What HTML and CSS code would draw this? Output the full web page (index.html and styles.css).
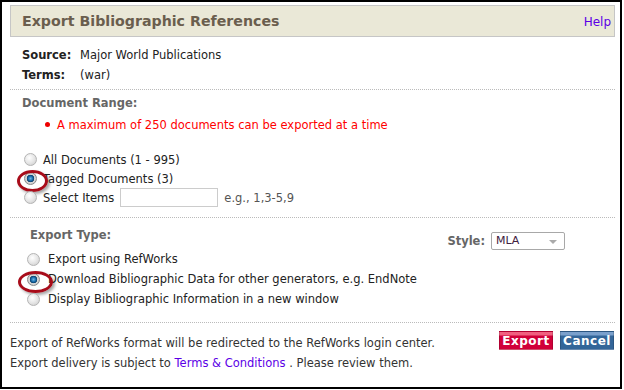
FILE: index.html
```html
<!DOCTYPE html>
<html lang="en">

<head>
	<meta charset="utf-8">
	<title>Export Bibliographic References</title>
	<link rel="stylesheet" href="styles.css">
</head>

<body>
	<div class="frame">
		<div class="header">
			<h1 class="title">Export Bibliographic References</h1>
			<a class="help" href="#">Help</a>
		</div>

		<div class="meta">
			<div class="metaRow"><b>Source:</b><span>Major World Publications</span></div>
			<div class="metaRow"><b>Terms:</b><span>(war)</span></div>
		</div>

		<div class="rule"></div>

		<section class="range">
			<h2 class="label">Document Range:</h2>
			<p class="note"><span class="dot"></span>A maximum of 250 documents can be exported at a time</p>
			<div class="options">
				<div class="option"><span class="radio"></span>All Documents (1 - 995)</div>
				<div class="option"><span class="radio checked marked"></span>Tagged Documents (3)</div>
				<div class="option"><span class="radio"></span>Select Items<span class="field"></span><span class="hint">e.g., 1,3-5,9</span></div>
			</div>
		</section>

		<div class="rule"></div>

		<section class="type">
			<div class="typeHead">
				<h2 class="label">Export Type:</h2>
				<div class="style">
					<span class="label">Style:</span>
					<span class="select">MLA<span class="arrow"></span></span>
				</div>
			</div>
			<div class="options">
				<div class="option"><span class="radio"></span>Export using RefWorks</div>
				<div class="option"><span class="radio checked marked wide"></span>Download Bibliographic Data for other generators, e.g. EndNote</div>
				<div class="option"><span class="radio"></span>Display Bibliographic Information in a new window</div>
			</div>
		</section>

		<div class="rule"></div>

		<div class="footer">
			<div class="footText">
				<p>Export of RefWorks format will be redirected to the RefWorks login center.</p>
				<p>Export delivery is subject to <a href="#">Terms &amp; Conditions</a> . Please review them.</p>
			</div>
			<div class="buttons">
				<button class="btn export">Export</button>
				<button class="btn cancel">Cancel</button>
			</div>
		</div>
	</div>
</body>

</html>
```

FILE: styles.css
```css
* {
	margin: 0;
	padding: 0;
	box-sizing: border-box;
}

body {
	font-family: "DejaVu Sans", Verdana, sans-serif;
	font-size: 11.5px;
	color: #222;
	background: #fff;
}

.frame {
	width: 622px;
	height: 389px;
	border: 2px solid #000;
	padding: 3px 5px 0 8px;
}

.header {
	height: 32px;
	background: #eae8d7;
	border: 1px solid #c6c6c6;
	display: flex;
	align-items: center;
	justify-content: space-between;
	padding: 0 3px 0 11px;
}

.title {
	font-size: 14.2px;
	font-weight: bold;
	color: #6a5e4e;
}

.help {
	font-size: 12px;
	color: #5b00e6;
	text-decoration: none;
	padding-top: 2px;
}

.meta {
	padding: 8px 0 4px 12px;
}

.metaRow {
	height: 20px;
	line-height: 20px;
}

.metaRow b {
	display: inline-block;
	width: 58px;
}

.rule {
	border-top: 1px dotted #bbb;
}

.range {
	padding: 3px 0 0 12px;
}

.label {
	font-size: 11.5px;
	font-weight: bold;
	color: #666;
	line-height: 20px;
}

.note {
	color: #f00;
	line-height: 20px;
	margin-top: 2px;
	padding-left: 23px;
	display: flex;
	align-items: center;
}

.dot {
	width: 5px;
	height: 5px;
	border-radius: 50%;
	background: #e00;
	margin-right: 7px;
	margin-top: -2px;
}

.options {
	padding-top: 15px;
	padding-bottom: 10px;
}

.option {
	height: 19px;
	display: flex;
	align-items: center;
}

.radio {
	position: relative;
	width: 13px;
	height: 13px;
	border-radius: 50%;
	border: 1px solid #b4b4b4;
	background: radial-gradient(circle at 40% 35%, #fff 0%, #e4e4e4 55%, #c8c8c8 100%);
	margin: 0 6px 0 2px;
	flex: none;
}

.radio.checked {
	border-color: #8a8a8a;
	background: radial-gradient(circle at 50% 50%, #6bb7e6 0%, #1a6aa8 30%, #0b3f6a 45%, #d8d8d8 52%, #bdbdbd 100%);
}

.radio.marked::after {
	content: "";
	position: absolute;
	left: -8px;
	top: -3px;
	width: 25px;
	height: 16px;
	border: 3px solid #a80c1a;
	border-radius: 50%;
	box-shadow: 2px 2px 3px rgba(0, 0, 0, .35);
}

.radio.wide::after {
	left: -10px;
	width: 29px;
}

.field {
	width: 98px;
	height: 19px;
	border: 1px solid #ccc;
	margin: 0 6px 0 6px;
	background: #fff;
}

.hint {
	color: #555;
}

.type {
	padding: 7px 0 13px 20px;
}

.type .options {
	padding: 4px 0 0 0;
}

.type .option {
	height: 20px;
}

.type .radio {
	margin: 0 8px 0 -3px;
}

.typeHead {
	display: flex;
	justify-content: space-between;
	align-items: flex-start;
	height: 20px;
}

.style {
	display: flex;
	align-items: center;
	margin-top: 6px;
	margin-right: 50px;
}

.style .label {
	margin-right: 6px;
}

.select {
	position: relative;
	width: 74px;
	height: 18px;
	line-height: 16px;
	border: 1px solid #a8a8a8;
	border-radius: 2px;
	padding-left: 4px;
	font-size: 11px;
	color: #402040;
	background: #fff;
}

.arrow {
	position: absolute;
	right: 7px;
	top: 7px;
	border-left: 4px solid transparent;
	border-right: 4px solid transparent;
	border-top: 4px solid #aaa;
}

.footer {
	display: flex;
	justify-content: space-between;
	padding-top: 10px;
}

.footText p {
	line-height: 20px;
	color: #333;
}

.footText a {
	color: #5b00e6;
	text-decoration: none;
}

.buttons {
	display: flex;
	gap: 7px;
	margin-top: -2px;
	margin-right: 1px;
}

.btn {
	width: 54px;
	height: 19px;
	border: 1px solid rgba(0, 0, 0, .15);
	color: #fff;
	font-family: "DejaVu Sans", Verdana, sans-serif;
	font-size: 12px;
	font-weight: bold;
	letter-spacing: .5px;
	line-height: 16px;
}

.export {
	background: linear-gradient(#f06080 0, #f06080 3px, #d1003a 4px, #d1003a 100%);
}

.cancel {
	background: linear-gradient(#7aa0cc 0, #7aa0cc 3px, #336699 4px, #336699 100%);
}
```
